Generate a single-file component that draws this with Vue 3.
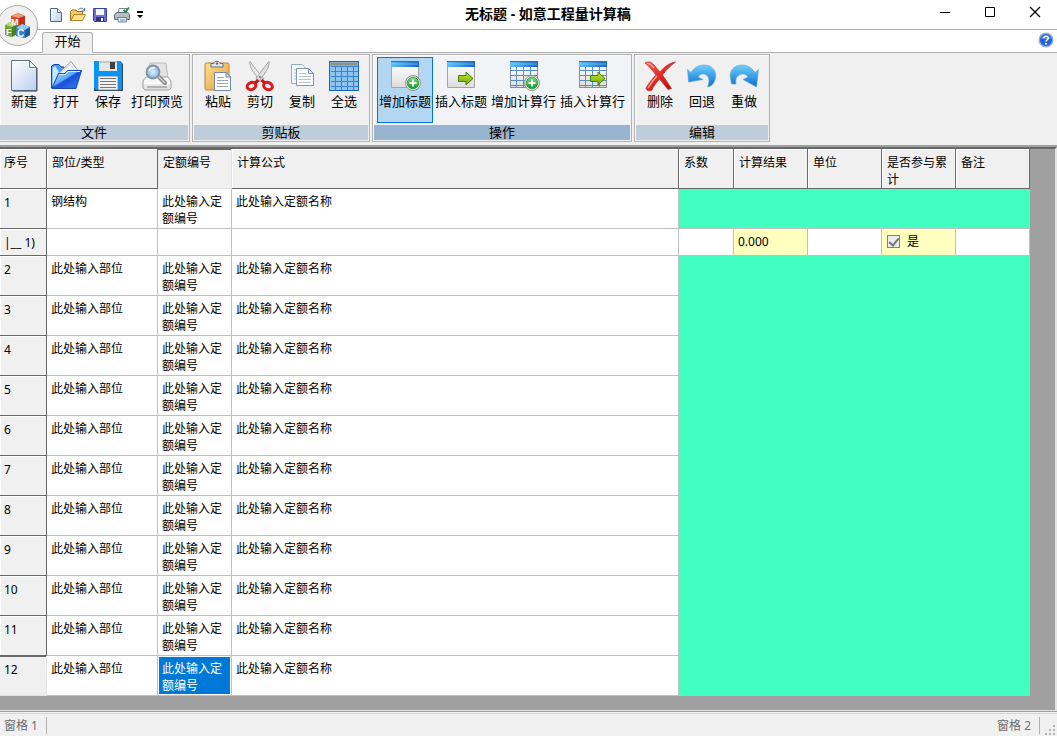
<script setup>
import { ref } from 'vue'

const quickActions = [
  { icon: 'q-new', label: '新建' },
  { icon: 'q-open', label: '打开' },
  { icon: 'q-save', label: '保存' },
  { icon: 'q-print', label: '打印' },
]

const groups = [
  {
    title: '文件',
    items: [
      { icon: 'new', label: '新建' },
      { icon: 'open', label: '打开' },
      { icon: 'save', label: '保存' },
      { icon: 'preview', label: '打印预览' },
    ],
  },
  {
    title: '剪贴板',
    items: [
      { icon: 'paste', label: '粘贴' },
      { icon: 'cut', label: '剪切' },
      { icon: 'copy', label: '复制' },
      { icon: 'all', label: '全选' },
    ],
  },
  {
    title: '操作',
    hot: true,
    items: [
      { icon: 'title-add', label: '增加标题', hot: true },
      { icon: 'title-insert', label: '插入标题' },
      { icon: 'row-add', label: '增加计算行' },
      { icon: 'row-insert', label: '插入计算行' },
    ],
  },
  {
    title: '编辑',
    items: [
      { icon: 'delete', label: '删除' },
      { icon: 'undo', label: '回退' },
      { icon: 'redo', label: '重做' },
    ],
  },
]

const columns = ['序号', '部位/类型', '定额编号', '计算公式', '系数', '计算结果', '单位', '是否参与累计', '备注']

const rows = [{ no: 1, part: '钢结构' }, { no: '1)', sub: true, result: '0.000' }]
for (let n = 2; n <= 12; n++) rows.push({ no: n, part: '此处输入部位' })

const counted = ref(true)
</script>

<template>
  <div class="window">
    <svg class="sprites" width="0" height="0" aria-hidden="true">
      <defs>
        <linearGradient id="g-page" x1="0" y1="0" x2="1" y2="1"><stop offset="0" stop-color="#fff" /><stop offset="1" stop-color="#b9d0ee" /></linearGradient>
        <linearGradient id="g-folder" x1="0" y1="0" x2="1" y2="1"><stop offset="0" stop-color="#bfe4ff" /><stop offset=".45" stop-color="#5aa8f4" /><stop offset=".5" stop-color="#1a4fd6" /><stop offset="1" stop-color="#2f86ee" /></linearGradient>
        <linearGradient id="g-bar" x1="0" y1="0" x2="1" y2="0"><stop offset="0" stop-color="#5bc0f8" /><stop offset="1" stop-color="#1667c4" /></linearGradient>
        <linearGradient id="g-body" x1="0" y1="0" x2="0" y2="1"><stop offset="0" stop-color="#fff" /><stop offset="1" stop-color="#dcdcdc" /></linearGradient>
        <linearGradient id="g-green" x1="0" y1="0" x2="0" y2="1"><stop offset="0" stop-color="#c4e838" /><stop offset="1" stop-color="#6fa800" /></linearGradient>
        <linearGradient id="g-plus" x1="0" y1="0" x2="0" y2="1"><stop offset="0" stop-color="#7fdc7a" /><stop offset="1" stop-color="#0b9a2c" /></linearGradient>
        <linearGradient id="g-blue" x1="0" y1="0" x2="0" y2="1"><stop offset="0" stop-color="#6fd0fb" /><stop offset="1" stop-color="#0a6fd0" /></linearGradient>
        <linearGradient id="g-red" x1="0" y1="0" x2="1" y2="1"><stop offset="0" stop-color="#ff5a48" /><stop offset="1" stop-color="#b80000" /></linearGradient>
        <linearGradient id="g-clip" x1="0" y1="0" x2="1" y2="1"><stop offset="0" stop-color="#ffdf8c" /><stop offset="1" stop-color="#e0a040" /></linearGradient>
        <radialGradient id="g-lens"><stop offset="0" stop-color="#e4f3ff" /><stop offset="1" stop-color="#79b0e6" /></radialGradient>
      </defs>

      <symbol id="new" viewBox="0 0 32 32">
        <path d="M4.500 1H22L29 8V31.500H4.500Z" fill="#777" opacity=".5" />
        <path d="M3.500.500H21.500L28.500 7.500V30.500H3.500Z" fill="url(#g-page)" stroke="#5c718c" />
        <path d="M4.500 1.500H21V8.500H27.500" fill="none" stroke="#fff" />
        <path d="M21.500.500V7.500H28.500Z" fill="#eef4fc" stroke="#5c718c" />
        <path d="M29 8V31H5" fill="none" stroke="#4c545e" />
      </symbol>
      <symbol id="open" viewBox="0 0 32 32">
        <path d="M1.500 28V6L4 4.500H9L11 7H14V28Z" fill="#4d9cf0" stroke="#1646b0" />
        <path d="M2.500 26V8L5 6L9 12Z" fill="#c4e6ff" />
        <path d="M8 14L21 1.500L29 12L22 22H8Z" fill="#f9fbff" stroke="#7d98bd" />
        <path d="M10 13L20.500 4.500L26 13" fill="none" stroke="#c1d3ea" />
        <path d="M2 28.500L8.500 13.500H15L17.500 10.500H31.500L26 28.500Z" fill="url(#g-folder)" stroke="#1747b7" />
        <path d="M9 14.500H15.500L18 11.500H30" fill="none" stroke="#d7efff" />
      </symbol>
      <symbol id="save" viewBox="0 0 32 32">
        <path d="M2 1H28L31 4V31H2Z" fill="#39424c" />
        <path d="M2 1H28L30 3V30H4L2 28Z" fill="#0794fa" />
        <path d="M7 1H25V11H7Z" fill="#e6e6e6" /><path d="M7 1H25V3H7Z" fill="#c2c6ca" />
        <path d="M18 2H23V9H18Z" fill="#404040" />
        <path d="M6 16H26V30H6Z" fill="#f0f0f0" stroke="#4d81aa" stroke-width=".8" />
        <path d="M8 18.500H24M8 21.500H24M8 24.500H24M8 27.500H24" stroke="#777" stroke-width="1.200" />
      </symbol>
      <symbol id="preview" viewBox="0 0 32 32">
        <path d="M9 3H25L27 19H7Z" fill="#e4e4e4" stroke="#bcbcbc" />
        <path d="M5 17H27L30 21V28L28 30H4L2 28V21Z" fill="url(#g-body)" stroke="#a0a0a0" />
        <path d="M3 23H29" stroke="#fff" stroke-width="2" /><path d="M6 27H26" stroke="#b4b4b4" stroke-width="2" />
        <path d="M17 16L24 23" stroke="#888" stroke-width="4" stroke-linecap="round" /><path d="M17 16L24 23" stroke="#d2d2d2" stroke-width="1.500" />
        <circle cx="12" cy="12" r="6.500" fill="url(#g-lens)" stroke="#8594a5" stroke-width="1.800" />
        <path d="M8 11A4.500 4.500 0 0 1 14 8" fill="none" stroke="#fff" stroke-width="1.500" />
      </symbol>
      <symbol id="paste" viewBox="0 0 32 32">
        <rect x="3" y="3" width="24" height="27" rx="1.500" fill="url(#g-clip)" stroke="#bd8231" />
        <path d="M9 7V3.500H12C12 .5 18 .5 18 3.500H21V7Z" fill="#e0e4e8" stroke="#69717a" /><circle cx="15" cy="3.500" r="1.200" fill="#6c747d" />
        <path d="M12.500 12.500H24L28.500 17V30.500H12.500Z" fill="#fff" stroke="#7189aa" /><path d="M24 12.500V17H28.500Z" fill="#dbe6f4" stroke="#7189aa" />
        <path d="M15 17.500H22M15 20.500H26M15 23.500H26M15 26.500H26" stroke="#9aaabd" />
      </symbol>
      <symbol id="cut" viewBox="0 0 32 32">
        <path d="M6 1.500C5 6 9 13 17.500 22L19.500 18C14 12 9 6 6 1.500Z" fill="#e9e9e9" stroke="#a4a4a4" />
        <path d="M25 1.500C26 7 21 13 14.500 22L12 18C17 12 21 6 25 1.500Z" fill="#e2e2e2" stroke="#a0a0a0" />
        <circle cx="16" cy="17" r="1.200" fill="#888" />
        <ellipse cx="7.500" cy="26" rx="4.500" ry="3.500" transform="rotate(-25 7.500 26)" fill="none" stroke="#d91b20" stroke-width="3" />
        <ellipse cx="24" cy="26" rx="4.500" ry="3.500" transform="rotate(25 24 26)" fill="none" stroke="#d91b20" stroke-width="3" />
        <path d="M11 23L14.500 20M21 23L17.500 20" stroke="#c8141a" stroke-width="3" />
      </symbol>
      <symbol id="copy" viewBox="0 0 32 32">
        <path d="M5.500 4.500H16L20.500 9V23.500H5.500Z" fill="#f5f9ff" stroke="#94aacb" /><path d="M8 10H12M8 13H12M8 16H12M8 19H12" stroke="#adc0d9" />
        <path d="M10.500 8.500H22.500L27.500 13.500V25.500H10.500Z" fill="#fff" stroke="#7f95b5" /><path d="M22.500 8.500V13.500H27.500Z" fill="#dbe6f4" stroke="#7f95b5" />
        <path d="M13 13.500H20M13 16.500H25M13 19.500H25M13 22.500H25" stroke="#b4c2d6" />
      </symbol>
      <symbol id="all" viewBox="0 0 32 32">
        <rect x="1.500" y="1.500" width="29" height="29" fill="#8fc3f0" stroke="#1964bd" />
        <rect x="2.500" y="2.500" width="27" height="3" fill="#8c9384" />
        <path d="M7.500 6V30M13.500 6V30M19.500 6V30M25.500 6V30M3 6.500H30M3 11.500H30M3 16.500H30M3 21.500H30M3 26.500H30" stroke="#3684cf" />
      </symbol>

      <symbol id="sheet" viewBox="0 0 32 32">
        <path d="M2.500 3V27.500H29.500V3Z" fill="url(#g-body)" stroke="#a5a5a5" />
        <rect x="2" y="1" width="28" height="6" fill="url(#g-bar)" /><path d="M2 1.500H30" stroke="#2476bc" /><path d="M3 4H29" stroke="#8bdcff" opacity=".6" />
      </symbol>
      <symbol id="lines" viewBox="0 0 32 32">
        <path d="M3 10.500H29M3 15.500H29M3 20.500H29M3 25.500H29" stroke="#548fc4" /><path d="M8.500 7V27M15.500 7V27M22.500 7V27" stroke="#5b91be" />
        <path d="M2.500 7V27.500H29.500V7" fill="none" stroke="#828e9a" />
      </symbol>
      <symbol id="plus" viewBox="0 0 32 32">
        <circle cx="24" cy="23" r="7.500" fill="#eee" stroke="#8d938d" /><circle cx="24" cy="23" r="5.800" fill="url(#g-plus)" stroke="#198c31" stroke-width=".7" />
        <path d="M20.500 23H27.500M24 19.500V26.500" stroke="#fff" stroke-width="2" />
      </symbol>
      <symbol id="arrow" viewBox="0 0 32 32">
        <path d="M13.500 15.500H21V12L28 18.500L21 25V21.500H13.500Z" fill="url(#g-green)" stroke="#4b7c0a" />
      </symbol>
      <symbol id="title-add" viewBox="0 0 32 32"><use href="#sheet" /><use href="#plus" /></symbol>
      <symbol id="title-insert" viewBox="0 0 32 32"><use href="#sheet" /><use href="#arrow" /></symbol>
      <symbol id="row-add" viewBox="0 0 32 32"><use href="#sheet" /><use href="#lines" /><use href="#plus" /></symbol>
      <symbol id="row-insert" viewBox="0 0 32 32"><use href="#sheet" /><use href="#lines" /><use href="#arrow" /></symbol>

      <symbol id="delete" viewBox="0 0 32 32">
        <path d="M1 3C4 1 7 2 9 4L16 12C20 7 25 3 31.500 2C26 6 22 10 18.500 15C22 20 25 25 27.500 28.500L24 29.500C21 26 18 22 15.500 19C12 23 9 27 8 30C5 32 2 30 2 28C5 23 8 19 12 15C9 11 5 6 1 3Z" fill="url(#g-red)" stroke="#c4322c" stroke-width=".8" />
        <path d="M3 3.500C6 3 8 6 10 8M4 28C7 23 10 19 13 16" fill="none" stroke="#ffada5" stroke-width="1.200" />
      </symbol>
      <symbol id="undo" viewBox="0 0 32 32">
        <path d="M1.500 9.500L5 12.500C9 6.500 14 5 18 5C26 5 31 11 29.500 18C28.500 23 26 26 21.500 27C24.500 21 23 15 18 14C15 13.500 13 15 12 17L17 19.500L2.500 22Z" fill="url(#g-blue)" stroke="#52a6dc" stroke-width=".6" />
      </symbol>
      <symbol id="redo" viewBox="0 0 32 32">
        <path d="M30.500 9.500L27 12.500C23 6.500 18 5 14 5C6 5 1 11 2.500 18L3.500 24L8 24C7 18 9 15 14 14C17 13.500 19 15 20 17L15 19.500L28.500 27Z" fill="url(#g-blue)" stroke="#52a6dc" stroke-width=".6" />
      </symbol>

      <symbol id="q-new" viewBox="0 0 16 16">
        <path d="M2.500 1.500H9.500L13.500 5.500V14.500H2.500Z" fill="url(#g-page)" stroke="#52698a" /><path d="M9.500 1.500V5.500H13.500" fill="#fff" stroke="#52698a" />
      </symbol>
      <symbol id="q-open" viewBox="0 0 16 16">
        <path d="M.500 13.500V4.500L2 3H6L7 4.500H12.500V13.500Z" fill="#f3ca62" stroke="#9a7020" /><path d="M1 13.500L4 7.500H15.500L12.500 13.500Z" fill="#ffe08a" stroke="#b58327" />
        <path d="M8.500 2.500C11 .5 13 1 14 3M14.500 1V4H11.500" fill="none" stroke="#526b91" />
      </symbol>
      <symbol id="q-save" viewBox="0 0 16 16">
        <path d="M1.500 1.500H14.500V14.500H2.500L1.500 13.500Z" fill="#6b70dc" stroke="#3b3fa8" /><path d="M4 2H12V8H4Z" fill="#f3f6ff" /><path d="M4 10H12V14H4Z" fill="#35376d" /><path d="M9 11H11V14H9Z" fill="#fff" />
      </symbol>
      <symbol id="q-print" viewBox="0 0 16 16">
        <path d="M4 7L5 1.500H13L12 7" fill="#fff" stroke="#7c8792" /><path d="M.500 7.500L3 5.500H14L15.500 7.500V12.500H.500Z" fill="#b8bec5" stroke="#626b75" />
        <path d="M3.500 10.500H12.500V15H4.500Z" fill="#e5f1ff" stroke="#6b7b8d" /><path d="M6 13H11" stroke="#4c8ed7" /><path d="M9.500 3L11.500 5L15 .500" fill="none" stroke="#248c36" stroke-width="1.800" />
      </symbol>
    </svg>

    <header class="titlebar">
      <nav class="quick" aria-label="快速访问">
        <button v-for="q in quickActions" :key="q.icon" class="quick-btn" :aria-label="q.label">
          <svg width="16" height="16"><use :href="'#' + q.icon" /></svg>
        </button>
        <button class="quick-btn more" aria-label="自定义">
          <svg width="8" height="8" viewBox="0 0 8 8"><path d="M1 1H7" stroke="#000" stroke-width="2" /><path d="M1 4H7L4 7Z" /></svg>
        </button>
      </nav>
      <h1 class="title">无标题 - 如意工程量计算稿</h1>
      <div class="controls">
        <button aria-label="最小化"><svg width="12" height="12" viewBox="0 0 12 12"><path d="M1 6.500H11" stroke="#000" /></svg></button>
        <button aria-label="最大化"><svg width="12" height="12" viewBox="0 0 12 12"><path d="M1.500 1.500H10.500V10.500H1.500Z" fill="none" stroke="#000" /></svg></button>
        <button aria-label="关闭"><svg width="12" height="12" viewBox="0 0 12 12"><path d="M1 1L11 11M11 1L1 11" stroke="#000" stroke-width="1.200" /></svg></button>
      </div>
    </header>

    <button class="orb" aria-label="应用程序菜单">
      <svg width="28" height="28" viewBox="0 0 28 28" font-family="Liberation Sans, sans-serif" font-weight="bold" fill="#fff">
        <path d="M7 4L14 1L21 4V13L15 16L7 14Z" fill="#dc4a28" /><path d="M7 4L14 1L21 4L15 6Z" fill="#f59a7c" /><path d="M15 6L21 4V13L15 16Z" fill="#b83420" />
        <path d="M1 13L7 10L13 13V22L7 25L1 23Z" fill="#74a53a" /><path d="M1 13L7 10L13 13L8 15Z" fill="#b4d67c" /><path d="M8 15L13 13V22L8 25Z" fill="#4c7f24" />
        <path d="M12 16L18 12L26 15V23L20 26L12 24Z" fill="#3080c8" /><path d="M12 16L18 12L26 15L21 18Z" fill="#8fccf4" /><path d="M21 18L26 15V23L21 26Z" fill="#1c5aa0" />
        <text x="7" y="13" font-size="9">M</text><text x="2" y="23" font-size="9">F</text><text x="13" y="25" font-size="10">C</text>
      </svg>
    </button>

    <div class="tabs" role="tablist">
      <button class="tab" role="tab" aria-selected="true">开始</button>
      <button class="help" aria-label="帮助">
        <svg width="16" height="16" viewBox="0 0 16 16">
          <circle cx="8" cy="8" r="6.800" fill="#2461d8" stroke="#93add8" stroke-width="1.500" /><path d="M3 7C4 2 12 2 13 7" fill="#6ba0f3" opacity=".6" />
          <path d="M5.800 6.300C6 3.500 10.500 3.700 10.200 6.300C10 7.700 8 7.900 8 9.600" fill="none" stroke="#fff" stroke-width="1.500" /><circle cx="8" cy="11.700" r="1" fill="#fff" />
        </svg>
      </button>
    </div>

    <div class="ribbon">
      <section v-for="g in groups" :key="g.title" class="group" :class="{ hot: g.hot }">
        <div class="tools">
          <button v-for="t in g.items" :key="t.icon" class="tool" :class="{ active: t.hot }">
            <svg width="32" height="32" aria-hidden="true"><use :href="'#' + t.icon" /></svg>
            <span>{{ t.label }}</span>
          </button>
        </div>
        <h2 class="caption">{{ g.title }}</h2>
      </section>
    </div>

    <main class="sheet-area">
      <table class="grid">
        <colgroup>
          <col class="w-no"><col class="w-part"><col class="w-mid"><col><col class="w-factor">
          <col class="w-mid"><col class="w-mid"><col class="w-mid"><col class="w-mid">
        </colgroup>
        <thead>
          <tr><th v-for="(c, i) in columns" :key="c" scope="col" :class="{ pressed: i === 2 }">{{ c }}</th></tr>
        </thead>
        <tbody>
          <tr v-for="r in rows" :key="r.no" :class="{ sub: r.sub }">
            <template v-if="r.sub">
              <th scope="row">|__ {{ r.no }}</th>
              <td></td><td></td><td></td><td></td>
              <td class="calc">{{ r.result }}</td>
              <td></td>
              <td class="calc"><label class="check"><input v-model="counted" type="checkbox">是</label></td>
              <td></td>
            </template>
            <template v-else>
              <th scope="row" :class="{ pressed: r.no === 12 }">{{ r.no }}</th>
              <td>{{ r.part }}</td>
              <td :class="{ selected: r.no === 12 }">此处输入定额编号</td>
              <td>此处输入定额名称</td>
              <td v-for="k in 5" :key="k" class="blank"></td>
            </template>
          </tr>
        </tbody>
      </table>
    </main>

    <footer class="status">
      <span class="pane">窗格 1</span>
      <span class="pane last">窗格 2</span>
      <svg class="grip" width="12" height="12" viewBox="0 0 12 12" fill="#b4b4b4"><path d="M8 1H10V3H8ZM8 5H10V7H8ZM4 5H6V7H4ZM8 9H10V11H8ZM4 9H6V11H4ZM0 9H2V11H0Z" /></svg>
    </footer>
  </div>
</template>

<style>
body {
  margin: 0;
}
</style>

<style scoped>
.window {
  position: relative;
  display: flex;
  flex-direction: column;
  min-height: 100vh;
  overflow: hidden;
  background: #f0f0f0;
  color: #000;
  font-family: "Noto Sans", "Noto Sans CJK SC", sans-serif;
  font-size: 12px;
  line-height: 17px;
}
.window * {
  box-sizing: border-box;
}
.sprites {
  position: absolute;
}
button {
  margin: 0;
  padding: 0;
  border: 0;
  background: none;
  color: inherit;
  font: inherit;
}
svg {
  display: block;
  flex: none;
}

.titlebar {
  display: flex;
  height: 30px;
  background: #fff;
  border-bottom: 1px solid #aeaeae;
}
.quick {
  display: flex;
  align-items: center;
  gap: 6px;
  width: 174px;
  padding-left: 48px;
}
.title {
  flex: 1;
  margin: 0;
  font-size: 14px;
  line-height: 28px;
  font-weight: bold;
  text-align: center;
  white-space: nowrap;
}
.controls {
  display: flex;
}
.controls button {
  display: flex;
  align-items: center;
  justify-content: center;
  width: 45px;
  height: 24px;
}
.orb {
  position: absolute;
  left: -3px;
  top: 5px;
  z-index: 2;
  display: flex;
  align-items: center;
  justify-content: center;
  width: 41px;
  height: 41px;
  border: 1px solid #a8a8a8;
  border-radius: 50%;
  background: #f0f0f0;
}

.tabs {
  display: flex;
  align-items: flex-start;
  justify-content: space-between;
  height: 23px;
  padding: 2px 3px 0 42px;
  background: #fff;
  border-bottom: 1px solid #aeaeae;
}
.tab {
  width: 51px;
  height: 21px;
  padding-bottom: 3px;
  border: 1px solid #aeaeae;
  border-bottom-color: #f0f0f0;
  border-radius: 3px 3px 0 0;
  background: #f0f0f0;
  font-size: 13px;
  line-height: 16px;
}

.ribbon {
  display: flex;
  gap: 2px;
  padding: 1px 0 3px;
  border-bottom: 1px solid #a0a0a0;
}
.group {
  padding: 1px;
  border: 1px solid #b2b2b2;
  box-shadow: inset 1px 1px #fafafa;
}
.group:first-child {
  padding-left: 0;
  border-left: 0;
}
.tools {
  display: flex;
  height: 69px;
  padding: 1px 3px 2px;
}
.tool {
  display: flex;
  flex-direction: column;
  align-items: center;
  min-width: 42px;
  padding: 2px 1px;
  border: 1px solid transparent;
  font-size: 13px;
  line-height: 18px;
  white-space: nowrap;
}
.tool.active {
  border-color: #0078d7;
  background: #b3d7f3;
}
.caption {
  margin: 0;
  background: #bfcddb;
  font-size: 13px;
  line-height: 15px;
  font-weight: normal;
  text-align: center;
}
.hot {
  background: #f1f3f6;
}
.hot .caption {
  background: #99b4d1;
}

.sheet-area {
  flex: 1;
  margin-top: 1px;
  padding-right: 25px;
  border-top: 2px solid #696969;
  border-right: 2px solid #e3e3e3;
  border-bottom: 1px solid #e3e3e3;
  outline: 1px solid #a0a0a0;
  background: #a0a0a0;
}
.grid {
  width: 100%;
  table-layout: fixed;
  border-collapse: separate;
  border-spacing: 0;
}
.w-no { width: 47px; }
.w-part { width: 111px; }
.w-mid { width: 74px; }
.w-factor { width: 55px; }
th,
td {
  height: 40px;
  padding: 4px 4px 1px;
  border: 0 solid #c0c0c0;
  border-width: 0 1px 1px 0;
  background: #fff;
  font-weight: normal;
  text-align: left;
  vertical-align: top;
}
th {
  border-color: #696969;
  background: #f0f0f0;
  box-shadow: inset 1px 1px #fff;
}
thead th {
  padding: 5px 3px 0 5px;
}
thead th:first-child {
  padding-left: 4px;
}
tbody th {
  padding-top: 5px;
  padding-bottom: 0;
}
.pressed {
  border-color: #e3e3e3;
  box-shadow: inset 0 1px #696969;
}
.sub th,
.sub td {
  height: 27px;
  padding-bottom: 0;
  white-space: pre;
}
.calc {
  background: #ffffc0;
}
.blank {
  background: #40ffc0;
}
.selected {
  color: #fff;
  background: #0078d7;
  box-shadow: inset 0 0 0 1px #fff;
}
.check {
  display: flex;
  align-items: center;
  gap: 7px;
}
.check input {
  appearance: none;
  display: flex;
  justify-content: center;
  width: 13px;
  height: 13px;
  margin: 0 0 0 1px;
  border: 1px solid #808080;
  background: #ececec;
}
.check input:checked::after {
  content: "";
  width: 4px;
  height: 8px;
  border: solid #777;
  border-width: 0 2px 2px 0;
  transform: rotate(40deg);
}

.status {
  display: flex;
  align-items: center;
  justify-content: space-between;
  height: 23px;
  margin-top: 2px;
  border-top: 1px solid #d7d7d7;
  color: #6d6d6d;
}
.pane {
  padding: 0 8px 0 4px;
  border-right: 1px solid #b0b0b0;
  line-height: 17px;
}
.last {
  margin-left: auto;
}
.grip {
  align-self: flex-end;
  margin-left: 5px;
}
</style>
